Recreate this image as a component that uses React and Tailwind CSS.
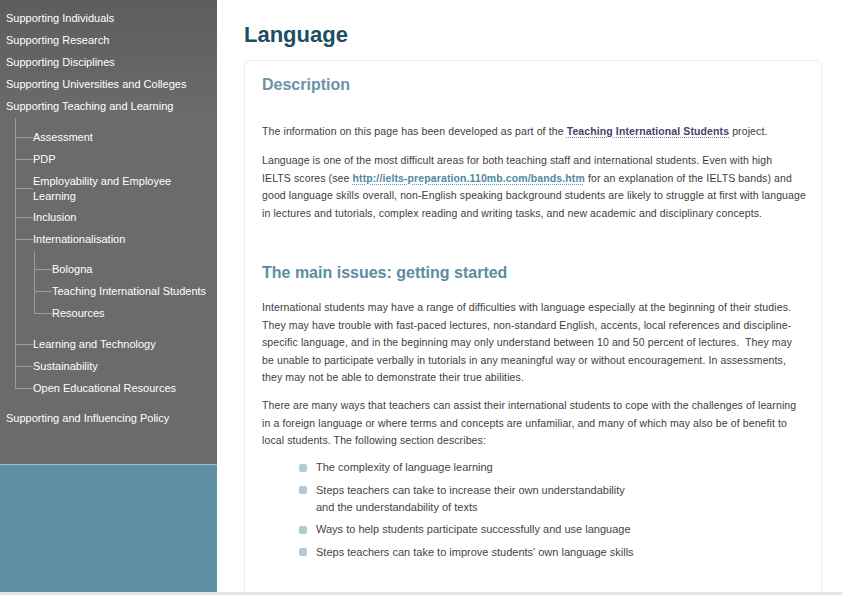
import React from "react";

const font = { fontFamily: '"Liberation Sans", Arial, sans-serif' };

function Tick() {
  return <span className="block w-[17px] h-px bg-[#9c9c9c] shrink-0" />;
}

function SubItem({ children, nested, tight }) {
  return (
    <li>
      <div className="flex items-center">
        <Tick />
        <span className={"leading-[15px] " + (tight ? "pt-[3.5px] pb-[2.5px]" : "py-[3.5px]")}>{children}</span>
      </div>
      {nested}
    </li>
  );
}

function LastItem({ children }) {
  return (
    <div className="flex items-start">
      <span className="block w-[18px] h-[11.5px] border-l border-b border-[#9c9c9c] shrink-0" />
      <span className="leading-[15px] py-[3.5px]">{children}</span>
    </div>
  );
}

function Sidebar() {
  const top = (t) => (
    <div className="h-[22px] leading-[22px] pl-[6px] whitespace-nowrap">{t}</div>
  );
  return (
    <div className="w-[217px] shrink-0 flex flex-col">
      <div className="h-[464px] bg-linear-to-b from-[#5d5d5d] to-[#6b6b6b] to-25% text-white text-[11px] pt-[7px]">
        {top("Supporting Individuals")}
        {top("Supporting Research")}
        {top("Supporting Disciplines")}
        {top("Supporting Universities and Colleges")}
        {top("Supporting Teaching and Learning")}
        <div className="pt-[1px] pb-[8px] ml-[15px] mr-[6px]">
          <ul className="border-l border-[#9c9c9c] pt-[8px]">
            <SubItem>Assessment</SubItem>
            <SubItem>PDP</SubItem>
            <SubItem tight>
              Employability and Employee
              <br />
              Learning
            </SubItem>
            <SubItem>Inclusion</SubItem>
            <SubItem
              nested={
                <div className="pt-[1px] pb-[9px] ml-[18px]">
                  <ul className="border-l border-[#9c9c9c] pt-[7px]">
                    <SubItem>Bologna</SubItem>
                    <SubItem>Teaching International Students</SubItem>
                  </ul>
                  <LastItem>Resources</LastItem>
                </div>
              }
            >
              Internationalisation
            </SubItem>
            <SubItem>Learning and Technology</SubItem>
            <SubItem>Sustainability</SubItem>
          </ul>
          <LastItem>Open Educational Resources</LastItem>
        </div>
        {top("Supporting and Influencing Policy")}
      </div>
      <div className="flex-1 bg-[#5e8fa2] border-t border-[#a3bcc6]" />
    </div>
  );
}

function Bullet({ children }) {
  return (
    <li className="flex items-start gap-[9px]">
      <span className="mt-[4.5px] w-[8px] h-[8px] rounded-[2px] bg-[#b3cad4] shrink-0" />
      <span className="leading-[17px]">{children}</span>
    </li>
  );
}

function Main() {
  return (
    <div className="flex-1 overflow-hidden pl-[27px] pt-[22px]">
      <h1 className="text-[22px] leading-[26px] font-bold text-[#1c4e5f] mb-[12px]">
        Language
      </h1>
      <div className="w-[578px] h-[600px] border border-[#ebebeb] rounded-[6px] pt-[14px] pl-[17px] pr-[18px] text-[10.5px] leading-[17.5px] tracking-[0.11px] text-[#3d3d3d]">
        <h2 className="text-[16px] leading-[20px] font-bold tracking-normal text-[#6b93a6] mb-[28px]">
          Description
        </h2>
        <p className="mb-[11.5px] whitespace-nowrap">
          The information on this page has been developed as part of the{" "}
          <span className="font-bold text-[#4a3d6a] underline decoration-dotted decoration-[#8a8a9a] underline-offset-2">
            Teaching International Students
          </span>{" "}
          project.
        </p>
        <p className="whitespace-nowrap">
          Language is one of the most difficult areas for both teaching staff and international students. Even with high
          <br />
          IELTS scores (see{" "}
          <span className="font-bold text-[#4e89a0] underline decoration-dotted decoration-[#6a9ab0] underline-offset-2">
            http://ielts-preparation.110mb.com/bands.htm
          </span>{" "}
          for an explanation of the IELTS bands) and
          <br />
          good language skills overall, non-English speaking background students are likely to struggle at first with language
          <br />
          in lectures and tutorials, complex reading and writing tasks, and new academic and disciplinary concepts.
        </p>
        <h2 className="mt-[41px] text-[16px] leading-[20px] font-bold tracking-normal text-[#5b8ca2] mb-[16px]">
          The main issues: getting started
        </h2>
        <p className="mb-[10.5px] whitespace-nowrap">
          International students may have a range of difficulties with language especially at the beginning of their studies.
          <br />
          They may have trouble with fast-paced lectures, non-standard English, accents, local references and discipline-
          <br />
          specific language, and in the beginning may only understand between 10 and 50 percent of lectures.&nbsp; They may
          <br />
          be unable to participate verbally in tutorials in any meaningful way or without encouragement. In assessments,
          <br />
          they may not be able to demonstrate their true abilities.
        </p>
        <p className="whitespace-nowrap">
          There are many ways that teachers can assist their international students to cope with the challenges of learning
          <br />
          in a foreign language or where terms and concepts are unfamiliar, and many of which may also be of benefit to
          <br />
          local students. The following section describes:
        </p>
        <ul className="mt-[9.5px] ml-[37px] flex flex-col gap-[5.5px] text-[11px] tracking-normal text-[#454545]">
          <Bullet>The complexity of language learning</Bullet>
          <Bullet>
            Steps teachers can take to increase their own understandability
            <br />
            and the understandability of texts
          </Bullet>
          <Bullet>Ways to help students participate successfully and use language</Bullet>
          <Bullet>Steps teachers can take to improve students' own language skills</Bullet>
        </ul>
      </div>
    </div>
  );
}

export default function App() {
  return (
    <div className="w-[842px] h-[595px] overflow-hidden flex flex-col bg-white" style={font}>
      <div className="flex h-[592px]">
        <Sidebar />
        <Main />
      </div>
      <div className="h-[3px] bg-[#e4e4e4]" />
    </div>
  );
}
